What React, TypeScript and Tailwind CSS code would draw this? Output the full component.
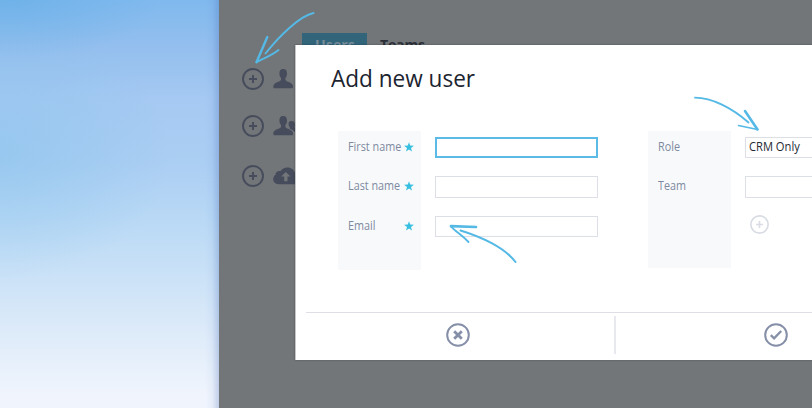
import React from "react";

function CirclePlus({ size, color, thick = 1.9 }: { size: number; color: string; thick?: number }) {
  return (
    <svg width={size} height={size} viewBox="0 0 22 22" fill="none" stroke={color} className="block shrink-0">
      <circle cx="11" cy="11" r="10" strokeWidth={thick} />
      <path d="M11 7v8M7 11h8" strokeWidth="1.9" />
    </svg>
  );
}

function Star() {
  return (
    <svg width="10" height="10" viewBox="0 0 10 10" fill="#37bfe0" className="block shrink-0">
      <path d="M5 0.2 6.2 3.6 9.9 3.7 7 5.9 8 9.5 5 7.4 2 9.5 3 5.9 0.1 3.7 3.8 3.6Z" />
    </svg>
  );
}

const person =
  "M10.2 0C7.4 0 6.3 2 6.4 4.5c0 2.200.8 3.700 1.600 4.600v2C7.600 12.800 0.300 13.600 0.300 17.400c0 1.200.5 1.900 1.500 1.900h16.800c1 0 1.500-.7 1.500-1.900 0-3.800-7.300-4.600-7.700-6.300v-2c.8-.9 1.600-2.400 1.600-4.600C14.100 2 13 0 10.200 0Z";

function PersonIcon() {
  return (
    <svg width="22" height="20" viewBox="0 0 22 20" fill="#464c5b" className="block shrink-0">
      <path d={person} />
    </svg>
  );
}

function PeopleIcon() {
  return (
    <svg width="30" height="20" viewBox="0 0 30 20" fill="#464c5b" className="block shrink-0">
      <path d={person} />
      <path d="M18.300 5c-2 0-2.700 1.300-2.700 3 0 1.700.6 2.800 1.300 3.500v1.300c1.800.8 3.200 1.600 4.300 3h6c0-3-5.400-3.100-5.600-4.500v-1.200c.6-.6.400-1.600.1-2.700 0-1.500-1-2.400-3.400-2.400Z" />
    </svg>
  );
}

function CloudIcon() {
  return (
    <svg width="30" height="18" viewBox="0 0 30 18" className="block shrink-0">
      <path d="M5.500 17.200C2.300 17.200.2 15.200.2 12.300c0-2 .9-3.700 2.300-4.600C2.200 5.200 5 3.200 7.700 4.100 9 1.700 11.500.4 14.300.4c4 0 7 2.300 7.800 5.700 3.200.2 5.600 2.600 5.600 5.600 0 3.200-2.400 5.500-5.600 5.500Z" fill="#464c5b" />
      <path d="M12.800 4.900 17.500 9.600h-3v4.600h-3.300V9.600H8.100Z" fill="#727679" />
    </svg>
  );
}

function Field({ className = "", children }: { className?: string; children?: React.ReactNode }) {
  return <div className={"box-border w-[163px] border " + className}>{children}</div>;
}

function Label({ text, required = false }: { text: string; required?: boolean }) {
  return (
    <div className="flex h-4 items-center pl-2.5">
      <span className="w-14 origin-left scale-x-[0.9] whitespace-nowrap text-[12px] leading-4 text-[#7d899f]">{text}</span>
      {required && <Star />}
    </div>
  );
}

export default function App() {
  return (
    <div className="relative flex h-[408px] w-[812px] overflow-hidden font-['Open_Sans',sans-serif]">
      <aside className="relative w-[219px] shrink-0 bg-[linear-gradient(180deg,#80b9ee_0%,#94bfee_12%,#a5c9f2_24%,#abcef3_40%,#b8d8f5_53%,#cbe2f7_68%,#deebf9_82%,#f0f5fd_97%)]">
        <div className="absolute inset-0 bg-[radial-gradient(ellipse_170px_130px_at_0%_37%,rgba(133,194,235,0.5),transparent),radial-gradient(ellipse_150px_60px_at_5%_0%,rgba(95,172,228,0.5),transparent)]" />
        <div className="absolute inset-y-0 right-0 w-[14px] bg-[linear-gradient(90deg,transparent,rgba(80,120,200,0.06)_50%,rgba(70,105,180,0.28))]" />
      </aside>

      <main className="relative flex-1 bg-[#727679]">
        <div className="ml-[83px] flex pt-[33px] text-[15px] font-bold leading-[23px]">
          <span className="h-6 w-[65px] bg-[#32647a] text-center text-[#768c99]">
            <span className="inline-block scale-x-[0.95]">Users</span>
          </span>
          <span className="ml-[13px] origin-left scale-x-[0.94] tracking-[-0.2px] text-[#2b2f37]">Teams</span>
        </div>
        <div className="-mt-px ml-[23px] flex flex-col">
          <div className="mt-3 flex h-[22px] items-center gap-[9px]">
            <CirclePlus size={22} color="#464c5b" /><PersonIcon />
          </div>
          <div className="mt-[25px] flex h-[22px] items-center gap-[9px]">
            <CirclePlus size={22} color="#464c5b" /><PeopleIcon />
          </div>
          <div className="mt-7 flex h-[22px] items-center gap-[9px]">
            <CirclePlus size={22} color="#464c5b" /><CloudIcon />
          </div>
        </div>
      </main>

      <section className="absolute left-[295px] top-[45px] flex h-[315px] w-[640px] flex-col border-l border-[#c5c6c8] bg-white shadow-[0_0_2px_rgba(0,0,0,0.3)]">
        <h1 className="ml-[35px] mt-[17px] h-8 origin-left scale-x-[0.94] whitespace-nowrap text-[24px] leading-8 text-[#1c2430]">Add new user</h1>
        <div className="ml-[42px] mt-[37px] flex h-[139px]">
          <div className="flex w-[83px] flex-col gap-[23.5px] bg-[#f8f9fb] pt-[7.5px]">
            <Label text="First name" required />
            <Label text="Last name" required />
            <Label text="Email" required />
          </div>
          <div className="ml-3.5 mt-1.5 flex flex-col gap-[18px]">
            <Field className="h-[21px] border-2 border-[#5bbbe6]" />
            <Field className="h-[22px] border-[#dddfe6]" />
            <Field className="h-[21px] border-[#dddfe6]" />
          </div>
          <div className="ml-[50px] flex h-[137px] w-[83px] flex-col gap-[23.5px] bg-[#f8f9fb] pt-[7.5px]">
            <Label text="Role" />
            <Label text="Team" />
          </div>
          <div className="ml-3.5 mt-1.5 flex flex-col gap-[18px]">
            <Field className="h-[21px] border-[#dddfe6] pl-[3px] text-[12px] leading-[18px] text-[#252a33]">
              <span className="inline-block origin-left scale-x-[0.93]">CRM Only</span>
            </Field>
            <Field className="h-[22px] border-[#dddfe6]" />
            <div className="-mt-px ml-[5px]"><CirclePlus size={19} color="#d9dce4" /></div>
          </div>
        </div>
        <footer className="ml-2.5 mt-[42px] flex h-[48px] border-t border-[#dddee6]">
          <button className="mt-[3px] flex h-[38px] w-[310px] items-center justify-center border-r-2 border-[#e8e9ee] pr-[5px]">
            <svg width="24" height="24" viewBox="0 0 24 24" fill="none" stroke="#858fa8" className="block">
              <circle cx="12" cy="12" r="10.800" strokeWidth="2" />
              <path d="m8.200 8.200 7.600 7.600m0-7.600-7.600 7.600" strokeWidth="2.800" />
            </svg>
          </button>
          <button className="mt-[3px] flex h-[38px] w-[309px] items-center pl-[148px]">
            <svg width="24" height="24" viewBox="0 0 24 24" fill="none" stroke="#858fa8" className="block">
              <circle cx="12" cy="12" r="10.800" strokeWidth="2" />
              <path d="m6.800 12.200 3.300 3.100 7.100-7.300" strokeWidth="2.300" />
            </svg>
          </button>
        </footer>
      </section>

      <svg width="812" height="408" viewBox="0 0 812 408" className="pointer-events-none absolute inset-0" fill="none" stroke="#55b9e6" strokeLinecap="round" strokeLinejoin="round">
        <path d="M313.500 13C300 16 280 35 265.500 53.500" strokeWidth="2" />
        <path d="M267.300 37 256.500 62.200" strokeWidth="2.400" />
        <path d="M256.500 62.200C264 58 271 56 278.500 50" strokeWidth="2" />
        <path d="M695 97.700C712 97.700 732 108 748.500 122.500" strokeWidth="1.800" />
        <path d="m745 111 12.500 18.500" strokeWidth="2.600" />
        <path d="m738.500 125.500 19 4" strokeWidth="1.600" />
        <path d="M515.500 262C505 248 482 237 460.500 230.500" strokeWidth="2" />
        <path d="m476 227-25-.8" strokeWidth="2.700" />
        <path d="M451 226.300C456 232 462 235 468.500 242" strokeWidth="1.900" />
      </svg>
    </div>
  );
}
